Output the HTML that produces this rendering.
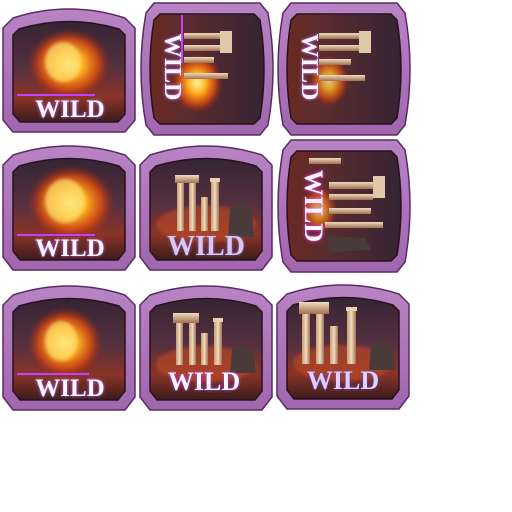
<!DOCTYPE html>
<html><head><meta charset="utf-8"><style>
html,body{margin:0;padding:0;background:#fff;width:512px;height:512px;overflow:hidden}
svg text{font-family:"Liberation Serif",serif;font-weight:bold}
</style></head><body>
<svg width="512" height="512" viewBox="0 0 512 512" xmlns="http://www.w3.org/2000/svg">
<defs>
<linearGradient id="frame" x1="0" y1="0" x2="0" y2="1"><stop offset="0" stop-color="#b884c4"/><stop offset="1" stop-color="#a066ae"/></linearGradient>
<linearGradient id="bg" x1="0" y1="0" x2="0" y2="1"><stop offset="0" stop-color="#352433"/><stop offset="0.45" stop-color="#553040"/><stop offset="0.75" stop-color="#8a3426"/><stop offset="1" stop-color="#3a1c1c"/></linearGradient>
<linearGradient id="bgr" x1="0" y1="0" x2="1" y2="0"><stop offset="0" stop-color="#6a2a22"/><stop offset="0.35" stop-color="#5a2c30"/><stop offset="1" stop-color="#352433"/></linearGradient>
<radialGradient id="fire"><stop offset="0" stop-color="#fff3a0"/><stop offset="0.35" stop-color="#ffb020"/><stop offset="0.7" stop-color="#e05010" stop-opacity="0.8"/><stop offset="1" stop-color="#a02010" stop-opacity="0"/></radialGradient>
<linearGradient id="col" x1="0" y1="0" x2="1" y2="0"><stop offset="0" stop-color="#c89a70"/><stop offset="0.5" stop-color="#f0dcc0"/><stop offset="1" stop-color="#a07050"/></linearGradient>
<linearGradient id="colh" x1="0" y1="0" x2="0" y2="1"><stop offset="0" stop-color="#f0dcc0"/><stop offset="1" stop-color="#a07050"/></linearGradient>
<filter id="glow"><feGaussianBlur stdDeviation="1.5"/></filter>
</defs>

<g transform="translate(3,2)">
<path d="M10,16 Q66,-2 122,16 L132,26 L132,118 L122,130 L10,130 L0,118 L0,26 Z" fill="url(#frame)" stroke="#5a2a66" stroke-width="1.5"/>
<path d="M16,27 Q66,12 116,27 L122,33 L122,112 L115,120 L17,120 L10,112 L10,33 Z" fill="url(#bg)" stroke="#2a1020" stroke-width="1.5"/>
<ellipse cx="66" cy="62" rx="42" ry="36" fill="url(#fire)"/>
<ellipse cx="60" cy="60" rx="18" ry="20" fill="#ffe070" opacity="0.7" filter="url(#glow)"/>
<line x1="14" y1="93" x2="92" y2="93" stroke="#c040ff" stroke-width="2"/>
<text x="67" y="115" font-size="25" text-anchor="middle" fill="#c070ff" filter="url(#glow)">WILD</text>
<text x="67" y="115" font-size="25" text-anchor="middle" fill="#fff4ff">WILD</text>
</g>
<g transform="translate(3,139)">
<path d="M10,16 Q66,-2 122,16 L132,26 L132,118 L122,131 L10,131 L0,118 L0,26 Z" fill="url(#frame)" stroke="#5a2a66" stroke-width="1.5"/>
<path d="M16,27 Q66,12 116,27 L122,33 L122,112 L115,121 L17,121 L10,112 L10,33 Z" fill="url(#bg)" stroke="#2a1020" stroke-width="1.5"/>
<ellipse cx="68" cy="64" rx="44" ry="38" fill="url(#fire)"/>
<ellipse cx="62" cy="62" rx="20" ry="22" fill="#ffe070" opacity="0.7" filter="url(#glow)"/>
<line x1="14" y1="96" x2="92" y2="96" stroke="#c040ff" stroke-width="2"/>
<text x="67" y="117" font-size="25" text-anchor="middle" fill="#c070ff" filter="url(#glow)">WILD</text>
<text x="67" y="117" font-size="25" text-anchor="middle" fill="#fff4ff">WILD</text>
</g>
<g transform="translate(3,279)">
<path d="M10,16 Q66,-2 122,16 L132,26 L132,118 L122,131 L10,131 L0,118 L0,26 Z" fill="url(#frame)" stroke="#5a2a66" stroke-width="1.5"/>
<path d="M16,27 Q66,12 116,27 L122,33 L122,112 L115,121 L17,121 L10,112 L10,33 Z" fill="url(#bg)" stroke="#2a1020" stroke-width="1.5"/>
<ellipse cx="62" cy="64" rx="38" ry="36" fill="url(#fire)"/>
<ellipse cx="58" cy="62" rx="16" ry="20" fill="#ffe070" opacity="0.7" filter="url(#glow)"/>
<line x1="14" y1="95" x2="86" y2="95" stroke="#c040ff" stroke-width="2"/>
<text x="67" y="117" font-size="25" text-anchor="middle" fill="#c070ff" filter="url(#glow)">WILD</text>
<text x="67" y="117" font-size="25" text-anchor="middle" fill="#fff4ff">WILD</text>
</g>

<g transform="translate(140,139)">
<path d="M10,16 Q66,-2 122,16 L132,26 L132,118 L122,131 L10,131 L0,118 L0,26 Z" fill="url(#frame)" stroke="#5a2a66" stroke-width="1.5"/>
<path d="M16,27 Q66,12 116,27 L122,33 L122,112 L115,121 L17,121 L10,112 L10,33 Z" fill="url(#bg)" stroke="#2a1020" stroke-width="1.5"/>
<ellipse cx="66" cy="85" rx="50" ry="18" fill="#d05020" opacity="0.5" filter="url(#glow)"/>
<rect x="35" y="36" width="24" height="8" fill="url(#colh)"/>
<rect x="37" y="44" width="7" height="48" fill="url(#col)"/><rect x="49" y="44" width="7" height="48" fill="url(#col)"/>
<rect x="61" y="58" width="7" height="34" fill="url(#col)"/><rect x="71" y="42" width="8" height="50" fill="url(#col)"/>
<rect x="70" y="39" width="10" height="4" fill="#e8d0b0"/>
<path d="M88,98 L90,70 L100,64 L112,70 L114,98 Z" fill="#4a3a3a"/>
<text x="66" y="116" font-size="28" text-anchor="middle" fill="#8060c0" filter="url(#glow)">WILD</text>
<text x="66" y="116" font-size="28" text-anchor="middle" fill="#d8c8f0">WILD</text>
</g>
<g transform="translate(140,279)">
<path d="M10,16 Q66,-2 122,16 L132,26 L132,118 L122,131 L10,131 L0,118 L0,26 Z" fill="url(#frame)" stroke="#5a2a66" stroke-width="1.5"/>
<path d="M16,27 Q66,12 116,27 L122,33 L122,112 L115,121 L17,121 L10,112 L10,33 Z" fill="url(#bg)" stroke="#2a1020" stroke-width="1.5"/>
<ellipse cx="66" cy="85" rx="50" ry="18" fill="#d05020" opacity="0.5" filter="url(#glow)"/>
<rect x="33" y="34" width="26" height="10" fill="url(#colh)"/>
<rect x="36" y="44" width="7" height="42" fill="url(#col)"/><rect x="49" y="44" width="7" height="42" fill="url(#col)"/>
<rect x="61" y="54" width="7" height="32" fill="url(#col)"/><rect x="74" y="42" width="8" height="44" fill="url(#col)"/>
<rect x="73" y="39" width="10" height="4" fill="#e8d0b0"/>
<path d="M90,94 L92,70 L102,66 L114,72 L116,94 Z" fill="#4a3a3a"/>
<text x="64" y="111" font-size="26" text-anchor="middle" fill="#a040ff" filter="url(#glow)">WILD</text>
<text x="64" y="111" font-size="26" text-anchor="middle" fill="#fff4ff">WILD</text>
</g>
<g transform="translate(277,278)">
<path d="M10,16 Q66,-2 122,16 L132,26 L132,118 L122,131 L10,131 L0,118 L0,26 Z" fill="url(#frame)" stroke="#5a2a66" stroke-width="1.5"/>
<path d="M16,27 Q66,12 116,27 L122,33 L122,112 L115,121 L17,121 L10,112 L10,33 Z" fill="url(#bg)" stroke="#2a1020" stroke-width="1.5"/>
<ellipse cx="66" cy="85" rx="50" ry="18" fill="#d05020" opacity="0.5" filter="url(#glow)"/>
<rect x="22" y="24" width="30" height="12" fill="url(#colh)"/>
<rect x="25" y="36" width="8" height="50" fill="url(#col)"/><rect x="39" y="36" width="8" height="50" fill="url(#col)"/>
<rect x="53" y="48" width="8" height="38" fill="url(#col)"/><rect x="70" y="32" width="9" height="54" fill="url(#col)"/>
<rect x="69" y="29" width="11" height="4" fill="#e8d0b0"/>
<path d="M92,92 L94,68 L104,64 L116,70 L118,92 Z" fill="#4a3a3a"/>
<text x="66" y="111" font-size="26" text-anchor="middle" fill="#6040c0" filter="url(#glow)">WILD</text>
<text x="66" y="111" font-size="26" text-anchor="middle" fill="#e0d0ff">WILD</text>
</g>

<g transform="translate(142,3)">
<path d="M12,0 L118,0 L126,10 Q136,66 126,122 L118,132 L12,132 L4,122 Q-6,66 4,10 Z" fill="url(#frame)" stroke="#5a2a66" stroke-width="1.5"/>
<path d="M18,11 L112,11 L118,17 Q126,66 118,115 L112,121 L18,121 L12,115 Q4,66 12,17 Z" fill="url(#bgr)" stroke="#2a1020" stroke-width="1.5"/>
<ellipse cx="55" cy="80" rx="26" ry="30" fill="url(#fire)"/>
<rect x="42" y="30" width="42" height="6" fill="url(#colh)"/><rect x="42" y="42" width="42" height="6" fill="url(#colh)"/>
<rect x="42" y="54" width="30" height="6" fill="url(#colh)"/><rect x="42" y="70" width="44" height="6" fill="url(#colh)"/>
<rect x="78" y="28" width="12" height="22" fill="#e0c8a8"/>
<line x1="40" y1="12" x2="40" y2="60" stroke="#c040ff" stroke-width="2"/>
<text transform="translate(23,64) rotate(90)" font-size="24" text-anchor="middle" fill="#c070ff" filter="url(#glow)">WILD</text>
<text transform="translate(23,64) rotate(90)" font-size="24" text-anchor="middle" fill="#fff4ff">WILD</text>
</g>
<g transform="translate(279,3)">
<path d="M12,0 L118,0 L126,10 Q136,66 126,122 L118,132 L12,132 L4,122 Q-6,66 4,10 Z" fill="url(#frame)" stroke="#5a2a66" stroke-width="1.5"/>
<path d="M18,11 L112,11 L118,17 Q126,66 118,115 L112,121 L18,121 L12,115 Q4,66 12,17 Z" fill="url(#bgr)" stroke="#2a1020" stroke-width="1.5"/>
<ellipse cx="50" cy="78" rx="20" ry="26" fill="url(#fire)" opacity="0.8"/>
<rect x="40" y="30" width="44" height="6" fill="url(#colh)"/><rect x="40" y="42" width="44" height="6" fill="url(#colh)"/>
<rect x="40" y="56" width="32" height="6" fill="url(#colh)"/><rect x="40" y="72" width="46" height="6" fill="url(#colh)"/>
<rect x="80" y="28" width="12" height="22" fill="#e0c8a8"/>
<text transform="translate(23,64) rotate(90)" font-size="24" text-anchor="middle" fill="#c070ff" filter="url(#glow)">WILD</text>
<text transform="translate(23,64) rotate(90)" font-size="24" text-anchor="middle" fill="#fff4ff">WILD</text>
</g>
<g transform="translate(279,140)">
<path d="M12,0 L118,0 L126,10 Q136,66 126,122 L118,132 L12,132 L4,122 Q-6,66 4,10 Z" fill="url(#frame)" stroke="#5a2a66" stroke-width="1.5"/>
<path d="M18,11 L112,11 L118,17 Q126,66 118,115 L112,121 L18,121 L12,115 Q4,66 12,17 Z" fill="url(#bgr)" stroke="#2a1020" stroke-width="1.5"/>
<ellipse cx="40" cy="70" rx="18" ry="24" fill="url(#fire)" opacity="0.7"/>
<rect x="30" y="18" width="32" height="6" fill="url(#colh)"/>
<rect x="50" y="42" width="50" height="7" fill="url(#colh)"/><rect x="50" y="54" width="44" height="6" fill="url(#colh)"/>
<rect x="50" y="68" width="42" height="6" fill="url(#colh)"/><rect x="46" y="82" width="58" height="6" fill="url(#colh)"/>
<rect x="94" y="36" width="12" height="22" fill="#e0c8a8"/>
<path d="M48,96 L86,98 L92,110 L50,112 Z" fill="#4a3a3a"/>
<text transform="translate(26,66) rotate(90)" font-size="26" text-anchor="middle" fill="#ff40ff" filter="url(#glow)">WILD</text>
<text transform="translate(26,66) rotate(90)" font-size="26" text-anchor="middle" fill="#fff4ff">WILD</text>
</g>
</svg>
</body></html>
